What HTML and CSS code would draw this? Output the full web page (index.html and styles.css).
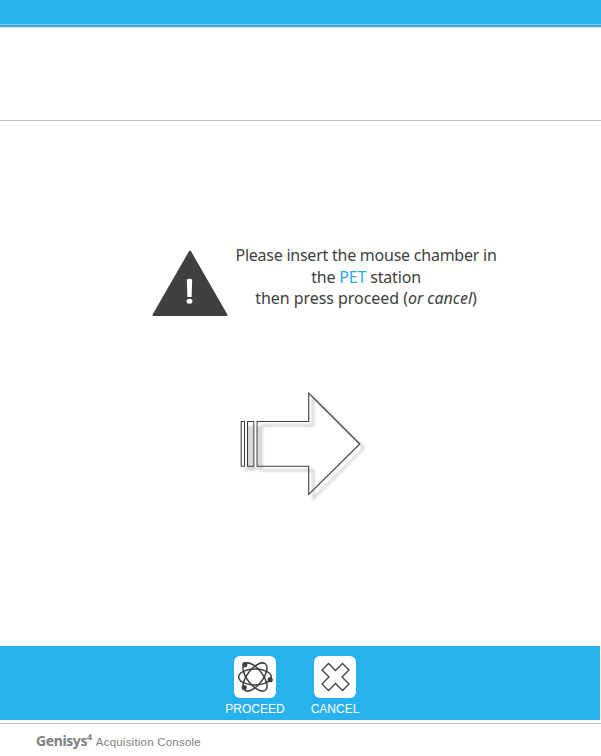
FILE: index.html
```html
<!DOCTYPE html>
<html lang="en">
<head>
<meta charset="utf-8">
<title>Genisys4 Acquisition Console</title>
<link rel="stylesheet" href="styles.css">
</head>
<body>
<header class="topbar"></header>
<div class="subheader"></div>
<main class="content">
  <section class="notice">
    <svg class="warning" width="76" height="67" viewBox="0 0 76 67">
      <path d="M38 1.500 L74.500 65 H1.500 Z" fill="#404040" stroke="#404040" stroke-width="2" stroke-linejoin="round"/>
      <path d="M34.800 29.500 Q37.500 28 40.200 29.500 L39.600 47 H35.400 Z" fill="#fff"/>
      <ellipse cx="37.500" cy="51.300" rx="2.900" ry="2.500" fill="#fff"/>
    </svg>
    <p class="message">
      <span class="line line-first">Please insert the mouse chamber in</span>
      <span class="line line-second">the <span class="accent">PET</span> station</span>
      <span class="line line-third">then press proceed (<em>or cancel</em>)</span>
    </p>
  </section>
  <svg class="arrow" width="130" height="112" viewBox="238 390 130 112">
    <defs><filter id="soft" x="-10%" y="-10%" width="120%" height="120%"><feGaussianBlur stdDeviation="0.8"/></filter></defs>
    <g filter="url(#soft)">
      <path d="M262 425.500H313V397L364 448L313.500 498.500V470.500H262" fill="none" stroke="#d6d6d6" stroke-width="2.400"/>
      <path d="M246 426H263V471H259.500L257 468L254.500 471H246Z" fill="#dadada"/>
    </g>
    <g fill="none" stroke="#404040" stroke-width="1.100">
      <path d="M241.200 421.500H244.500V466.300H241.200Z" fill="#fff"/>
      <path d="M247.500 421.500H253.900V466.300H247.500Z"/>
      <path d="M257 421.500H308.700V393L359.800 444L308.700 494.500V466.300H257Z"/>
    </g>
    <path d="M246 421V467M255.450 421V467" stroke="#fff" stroke-width="1.600"/>
  </svg>
</main>
<nav class="actions">
  <div class="action proceed">
    <svg class="tile" width="42" height="42" viewBox="0 0 42 42">
      <g fill="none" stroke="#404040" stroke-width="1.500">
        <ellipse cx="21" cy="21" rx="16.300" ry="8"/>
        <ellipse cx="21" cy="21" rx="16.800" ry="7.800" transform="rotate(52 21 21)"/>
        <ellipse cx="21" cy="21" rx="16.800" ry="7.800" transform="rotate(-52 21 21)"/>
      </g>
      <g fill="#404040">
        <circle cx="10.800" cy="8.700" r="2.600"/>
        <circle cx="36.200" cy="23.700" r="2.600"/>
        <circle cx="10.200" cy="31.500" r="2.600"/>
      </g>
    </svg>
    <span class="label">PROCEED</span>
  </div>
  <div class="action cancel">
    <svg class="tile" width="42" height="42" viewBox="0 0 42 42">
      <path d="M14.500 7.500L21.500 14.500L28.500 7.500L35 14L28 21L35 28L28.500 34.500L21.500 27.500L14.500 34.500L8 28L15 21L8 14Z" fill="none" stroke="#404040" stroke-width="1.300"/>
    </svg>
    <span class="label">CANCEL</span>
  </div>
</nav>
<footer class="footer"><span class="brand">Genisys<sup>4</sup></span><span class="product">Acquisition Console</span></footer>
</body>
</html>
```
FILE: styles.css
```css
* { box-sizing: border-box; }
body {
  margin: 0;
  height: 756px;
  display: flex;
  flex-direction: column;
  overflow: hidden;
  background: #fff;
  color: #404040;
  font-family: "Liberation Sans", Arial, sans-serif;
}
svg { display: block; flex: none; }
.topbar {
  height: 28px;
  flex: none;
  background: linear-gradient(#27b2ee 24px, #79c9e8 24px, #79c9e8 25px, #4aa6cf 25px, #4aa6cf 27px, #ccedf6 27px);
}
.subheader {
  height: 93px;
  flex: none;
  border-bottom: 1px solid #c1c1c1;
}
.content { height: 525px; flex: none; }
.notice {
  display: flex;
  padding: 124px 0 0 152px;
}
.warning { margin-top: 5px; }
.message {
  width: 262px;
  margin: 0 0 0 7px;
  font-family: "Noto Sans", sans-serif;
  font-size: 16px;
  line-height: 21.500px;
}
.line {
  display: block;
  text-align: center;
  white-space: nowrap;
}
.line-first { letter-spacing: -0.240px; }
.line-second { letter-spacing: -0.180px; }
.line-third { letter-spacing: -0.050px; }
.accent { color: #2ba9dc; }
.arrow { margin: 73px 0 0 238px; }
.actions {
  height: 74px;
  width: 600px;
  flex: none;
  display: flex;
  background: #27b2ee;
  padding: 10px 0 0 215px;
}
.action {
  width: 80px;
  display: flex;
  flex-direction: column;
  align-items: center;
}
.tile {
  border-radius: 6px;
  background: #fff;
}
.cancel .tile { margin-left: -1px; }
.label {
  margin-top: 4px;
  color: #fff;
  font-size: 12px;
  line-height: 14px;
}
.footer {
  flex: 1;
  display: flex;
  align-items: baseline;
  gap: 4px;
  margin-top: 3px;
  border-top: 1px solid #c1c1c1;
  padding: 7px 0 0 36px;
  color: #808080;
  line-height: 20px;
}
.brand {
  font-family: "Noto Sans", sans-serif;
  font-weight: 700;
  font-size: 14px;
  letter-spacing: -0.400px;
}
.brand sup {
  font-size: 9px;
  line-height: 0;
}
.product {
  font-size: 11.500px;
  letter-spacing: 0.220px;
}
```
